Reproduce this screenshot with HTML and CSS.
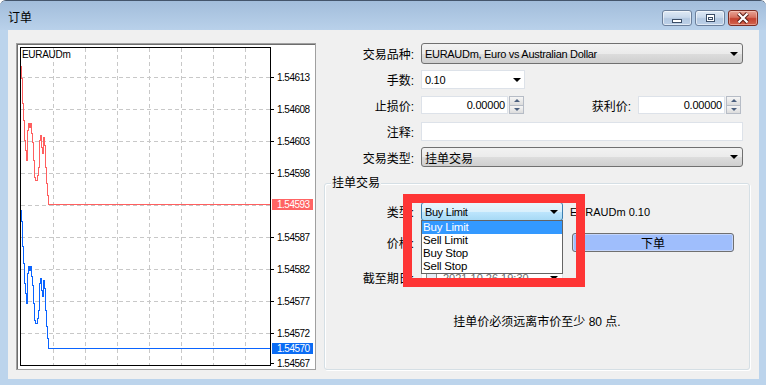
FILE: index.html
```html
<!DOCTYPE html>
<html lang="zh-CN">
<head>
  <meta charset="UTF-8">
  <title>订单</title>
  <link rel="stylesheet" href="styles.css">
</head>
<body>

<div class="window">
  <div class="titlebar">
    <span class="title">订单</span>
    <div class="caption-btns">
      <span class="cap cap-min">
        <svg width="12" height="6" viewBox="0 0 12 6"><rect x="1.5" y="1.5" width="9" height="3" fill="#fff" stroke="#3b4d66"/></svg>
      </span>
      <span class="cap cap-max">
        <svg width="11" height="10" viewBox="0 0 11 10"><rect x="1.5" y="1.5" width="8" height="7" fill="#fff" stroke="#3b4d66"/><rect x="3.5" y="4.5" width="4" height="2" fill="none" stroke="#3b4d66"/></svg>
      </span>
      <span class="cap cap-close">
        <svg width="14" height="12" viewBox="0 0 14 12"><path d="M2.5 1.5l9 9M11.5 1.5l-9 9" stroke="#5b1f18" stroke-width="4.2"/><path d="M2.5 1.5l9 9M11.5 1.5l-9 9" stroke="#fff" stroke-width="2.2"/></svg>
      </span>
    </div>
  </div>

  <div class="client">
    <div class="chart-panel">
      <svg class="chart" width="298" height="325" viewBox="17 44 298 325">
        <g stroke="#c8c8c8" stroke-dasharray="4 3" shape-rendering="crispEdges">
          <path d="M21 77.5H270M21 109.5H270M21 141.5H270M21 173.5H270M21 205.5H270M21 237.5H270M21 269.5H270M21 301.5H270M21 333.5H270"/>
          <path d="M53.5 48V365M85.5 48V365M117.5 48V365M149.5 48V365M181.5 48V365M213.5 48V365M245.5 48V365"/>
        </g>
        <rect x="20.5" y="47.5" width="250" height="318" fill="none" stroke="#000" shape-rendering="crispEdges"/>
        <path d="M271 77.5h3M271 109.5h3M271 141.5h3M271 173.5h3M271 237.5h3M271 269.5h3M271 301.5h3M271 333.5h3M271 363.5h3" stroke="#000" shape-rendering="crispEdges"/>

        <g class="axis">
          <text x="277" y="81">1.54613</text>
          <text x="277" y="113">1.54608</text>
          <text x="277" y="145">1.54603</text>
          <text x="277" y="177">1.54598</text>
          <text x="277" y="241">1.54587</text>
          <text x="277" y="273">1.54582</text>
          <text x="277" y="305">1.54577</text>
          <text x="277" y="337">1.54572</text>
          <text x="277" y="367">1.54567</text>
        </g>

        <path id="tick" d="M21.5 66V78H22.5V103H23.5V120H24.5V140H25.5V150H26.5V160H27.5V130H28.5V123H29.5V127H30.5V123H31.5V133H32.5V142H33.5V160H34.5V177H35.5V180H37.5V175H38.5V167H39.5V140H40.5V135H41.5V147H42.5V153H43.5V137H44.5V145H45.5V167H46.5V183H47.5V195H48.5V204.5H270" fill="none" stroke="#ff5f5f" shape-rendering="crispEdges"/>
        <path d="M21.5 66V78H22.5V103H23.5V120H24.5V140H25.5V150H26.5V160H27.5V130H28.5V123H29.5V127H30.5V123H31.5V133H32.5V142H33.5V160H34.5V177H35.5V180H37.5V175H38.5V167H39.5V140H40.5V135H41.5V147H42.5V153H43.5V137H44.5V145H45.5V167H46.5V183H47.5V195H48.5V204.5H270" transform="translate(0 143.5)" fill="none" stroke="#0a64ff" shape-rendering="crispEdges"/>

        <rect x="272" y="199" width="41" height="11" fill="#ff6464"/>
        <text class="axis-hl" x="277" y="208">1.54593</text>
        <rect x="272" y="343" width="41" height="11" fill="#0b6cf4"/>
        <text class="axis-hl" x="277" y="352">1.54570</text>

        <text class="symbol" x="22" y="58">EURAUDm</text>
      </svg>
    </div>

    <div class="order-form">
      <div class="row row-1">
        <span class="lbl">交易品种:</span>
        <div class="combo w-full"><span class="combo-text">EURAUDm, Euro vs Australian Dollar</span><span class="arrow"></span></div>
      </div>
      <div class="row row-2">
        <span class="lbl">手数:</span>
        <div class="edit-combo"><span class="combo-text">0.10</span><span class="arrow"></span></div>
      </div>
      <div class="row row-3">
        <span class="lbl">止损价:</span>
        <div class="spin">
          <span class="spin-field">0.00000</span>
          <span class="spin-btns"><i class="up"></i><i class="down"></i></span>
        </div>
        <span class="lbl lbl-tp">获利价:</span>
        <div class="spin">
          <span class="spin-field">0.00000</span>
          <span class="spin-btns"><i class="up"></i><i class="down"></i></span>
        </div>
      </div>
      <div class="row row-4">
        <span class="lbl">注释:</span>
        <div class="textbox w-full"></div>
      </div>
      <div class="row row-5">
        <span class="lbl">交易类型:</span>
        <div class="combo w-full"><span class="combo-text cn">挂单交易</span><span class="arrow"></span></div>
      </div>

      <div class="group">
        <div class="group-title">挂单交易</div>

        <div class="row row-6">
          <span class="lbl">类型:</span>
          <div class="combo combo-hot w-small">
            <span class="combo-text">Buy Limit</span><span class="arrow"></span>
            <ul class="dropdown">
              <li class="selected">Buy Limit</li>
              <li>Sell Limit</li>
              <li>Buy Stop</li>
              <li>Sell Stop</li>
            </ul>
            <div class="mark"></div>
          </div>
          <span class="sym">EURAUDm 0.10</span>
        </div>
        <div class="row row-7">
          <span class="lbl">价格:</span>
          <div class="textbox w-small"></div>
          <button class="btn-order">下单</button>
        </div>
        <div class="row row-8">
          <span class="lbl">截至期日:</span>
          <div class="datepick w-small">
            <span class="check"></span>
            <span class="date-text">2021.10.26 19:30</span>
            <span class="arrow"></span>
          </div>
        </div>
        <p class="note">挂单价必须远离市价至少 80 点.</p>
      </div>
    </div>
  </div>
</div>

</body>
</html>
```

FILE: styles.css
```css
* {
  box-sizing: border-box;
}

body {
  margin: 0;
  background: #fff;
  font-family: "Liberation Sans", "Noto Sans CJK SC", sans-serif;
  font-size: 11px;
  color: #000;
}

.window {
  width: 766px;
  height: 385px;
  display: flex;
  flex-direction: column;
  background: #bcd4ec;
  border-top: 1px solid #44556b;
  border-radius: 6px 6px 0 0;
  overflow: hidden;
}

/* title bar */
.titlebar {
  height: 29px;
  display: flex;
  align-items: flex-start;
  padding-left: 8px;
  background: linear-gradient(#a2bddb, #b9d1ea);
}

.title {
  margin-top: 10px;
  font-size: 12px;
  line-height: 14px;
}

.caption-btns {
  margin-left: auto;
  margin-top: 9px;
  margin-right: 8px;
  display: flex;
  gap: 3px;
}

.cap {
  width: 30px;
  height: 16px;
  display: flex;
  align-items: center;
  justify-content: center;
  border: 1px solid #6b7f9b;
  border-radius: 3px;
  background: linear-gradient(#dfe9f5 0%, #c9d9ec 45%, #b3c8e1 55%, #bcd0e8 100%);
  box-shadow: inset 0 0 0 1px rgba(255,255,255,0.55);
}

.cap-min svg {
  margin-top: 5px;
}

.cap-close {
  border-color: #7c2c22;
  background: linear-gradient(#e8a496 0%, #d7715f 45%, #c4412f 55%, #d3664f 100%);
  box-shadow: inset 0 0 0 1px rgba(255,220,210,0.45);
}

/* client area */
.client {
  flex: 1;
  display: flex;
  margin: 0 7px 6px 8px;
  background: #f0f0f0;
}

.chart-panel {
  width: 300px;
  height: 327px;
  margin: 13px 0 0 8px;
  background: #fff;
  border: 1px solid #a0a0a0;
  box-shadow: inset 1px 1px 0 #6d6d6d;
}

.chart {
  display: block;
}

.axis text,
.axis-hl {
  font-size: 10px;
  letter-spacing: -0.5px;
  fill: #000;
}

.axis-hl {
  fill: #fff;
}

.symbol {
  font-size: 10px;
  letter-spacing: -0.3px;
}

/* order form */
.order-form {
  width: 426px;
  margin: 13px 0 0 8px;
  display: flex;
  flex-direction: column;
}

.row {
  display: flex;
  align-items: stretch;
}

.lbl {
  width: 90px;
  margin-right: 7px;
  text-align: right;
  font-size: 12px;
  display: flex;
  align-items: center;
  justify-content: flex-end;
  white-space: nowrap;
}

.row-1 { height: 21px; }
.row-2 { height: 19px; margin-top: 6px; }
.row-3 { height: 18px; margin-top: 7px; }
.row-4 { height: 19px; margin-top: 8px; }
.row-5 { height: 20px; margin-top: 6px; }

.w-full { width: 322px; }
.w-small { width: 142px; }

.combo {
  position: relative;
  display: flex;
  align-items: center;
  padding-left: 3px;
  border: 1px solid #707070;
  border-radius: 3px;
  background: linear-gradient(#f2f2f2 0%, #ebebeb 50%, #dddddd 51%, #cfcfcf 100%);
}

.combo-text {
  flex: 1;
  letter-spacing: -0.3px;
  white-space: nowrap;
}

.combo-text.cn {
  font-size: 12px;
  letter-spacing: 0;
}

.arrow {
  width: 0;
  height: 0;
  margin-right: 4px;
  border-left: 4px solid transparent;
  border-right: 4px solid transparent;
  border-top: 4px solid #000;
}

.edit-combo {
  width: 104px;
  display: flex;
  align-items: center;
  padding-left: 3px;
  background: #fff;
  border: 1px solid #dde2e9;
}

.edit-combo .arrow {
  margin-right: 3px;
}

.textbox {
  background: #fff;
  border: 1px solid #dde2e9;
}

.spin {
  width: 103px;
  display: flex;
}

.spin-field {
  flex: 1;
  display: flex;
  align-items: center;
  justify-content: flex-end;
  padding-right: 2px;
  background: #fff;
  border: 1px solid #dde2e9;
  letter-spacing: -0.2px;
}

.spin-btns {
  width: 15px;
  margin-left: 1px;
  display: flex;
  flex-direction: column;
}

.spin-btns i {
  flex: 1;
  display: flex;
  align-items: center;
  justify-content: center;
  border: 1px solid #b6bcc6;
  background: linear-gradient(#f6f6f6, #dcdcdc);
}

.spin-btns i + i {
  border-top: none;
}

.spin-btns .up::before,
.spin-btns .down::before {
  content: "";
  border-left: 3px solid transparent;
  border-right: 3px solid transparent;
}

.spin-btns .up::before {
  border-bottom: 3px solid #4c607f;
}

.spin-btns .down::before {
  border-top: 3px solid #4c607f;
}

.lbl-tp {
  width: 107px;
}

/* pending order group */
.group {
  height: 187px;
  margin-top: 16px;
  border: 1px solid #d5dfe5;
  border-radius: 3px;
  box-shadow: inset 1px 1px 0 #fff, 1px 1px 0 #fff;
}

.group-title {
  width: fit-content;
  margin: -8px 0 0 6px;
  padding: 0 1px;
  background: #f0f0f0;
  font-size: 12px;
  line-height: 14px;
}

.group .lbl {
  width: 89px;
}

.row-6 { height: 19px; margin-top: 12px; }
.row-7 { height: 19px; margin-top: 12px; }
.row-8 { height: 19px; margin-top: 16px; }

.combo-hot {
  border-color: #3c7fb1;
  background: linear-gradient(#eaf6fd 0%, #d9f0fc 50%, #bee6fd 51%, #a7d9f5 100%);
}

.sym {
  margin-left: 7px;
  display: flex;
  align-items: center;
}

.dropdown {
  position: absolute;
  top: 100%;
  left: -1px;
  width: 142px;
  margin: 0;
  padding: 0;
  list-style: none;
  background: #fff;
  border: 1px solid #646464;
  z-index: 2;
}

.dropdown li {
  height: 13px;
  line-height: 13px;
  padding-left: 1px;
  font-size: 11.5px;
  letter-spacing: -0.2px;
}

.dropdown li.selected {
  background: #3399ff;
  color: #fff;
}

.mark {
  position: absolute;
  left: -19px;
  top: -9px;
  width: 182px;
  height: 93px;
  border: 9px solid #fe3535;
  z-index: 3;
}

.btn-order {
  width: 162px;
  margin-left: 9px;
  padding: 0;
  font-family: inherit;
  font-size: 12px;
  color: #000;
  border: 1px solid #707070;
  border-radius: 3px;
  background: #9fbefc;
  box-shadow: inset 0 0 0 1px #c4d5fb;
}

.datepick {
  display: flex;
  align-items: center;
  padding-left: 4px;
  background: #fff;
  border: 1px solid #dde2e9;
}

.check {
  width: 11px;
  height: 11px;
  border: 1px solid #8f8f8f;
  background: linear-gradient(#dfe9f5, #f5f8fc);
}

.date-text {
  flex: 1;
  margin-left: 6px;
  color: #6d6d6d;
}

.note {
  margin: 28px 0 0;
  text-align: center;
  font-size: 12px;
  line-height: 14px;
}
```
